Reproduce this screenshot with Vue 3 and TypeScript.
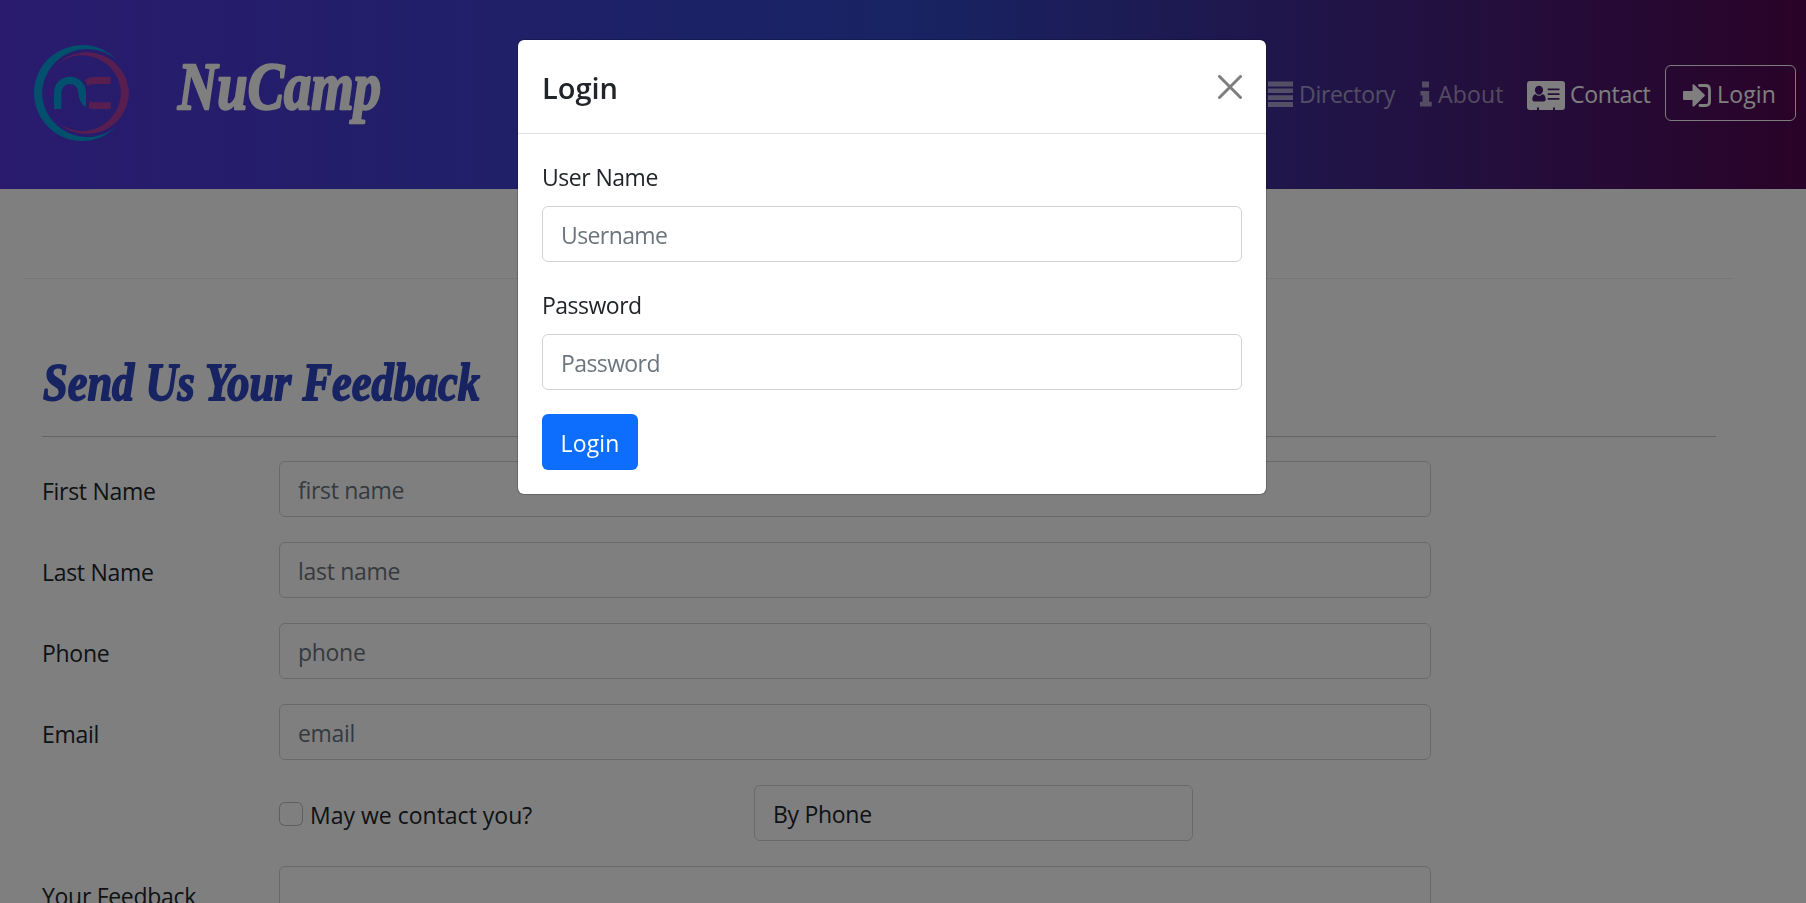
<script setup lang="ts">
import { ref } from 'vue'

interface Field {
  id: string
  label: string
  placeholder: string
}

const fields: Field[] = [
  { id: 'firstName', label: 'First Name', placeholder: 'first name' },
  { id: 'lastName', label: 'Last Name', placeholder: 'last name' },
  { id: 'phone', label: 'Phone', placeholder: 'phone' },
  { id: 'email', label: 'Email', placeholder: 'email' },
]

const modalOpen = ref(true)
</script>

<template>
  <div class="page">
    <header class="hero">
      <svg class="logo" viewBox="0 0 96 97">
        <g fill="#00a0dc">
          <path d="M82.700 14.700A48 48 0 1 0 82 82A45.500 45.500 0 0 1 8 48.200A45.500 45.500 0 0 1 82.700 14.700Z" />
          <path d="M20 64V47.500A16 15.800 0 0 1 52 47.500V62Q44.400 58 44.400 47.500A8.400 8.300 0 0 0 27.300 47.500V64Z" />
        </g>
        <g fill="#b03ca0">
          <path d="M24 18.500A42.300 42.300 0 0 1 95 48A42.300 42.300 0 0 1 24 77.700A39 39 0 0 0 87 48A39 39 0 0 0 24 18.500Z" />
          <path d="M51 35.300Q54.500 32 60 32H76.700V39H60Q56 39 53.500 41Z" />
          <path d="M55 56.300Q57 57.300 60 57.300H76.700V64H60Q57 64 55 63Z" />
        </g>
      </svg>
      <svg class="brand" viewBox="0 0 210 90">
        <text x="2" y="64" textLength="203" lengthAdjust="spacingAndGlyphs">NuCamp</text>
      </svg>
      <nav class="nav">
        <a class="item dim">
          <svg class="i-list" viewBox="0 0 25 26">
            <path d="M0 0.500H25V5.500H0ZM0 7.500H25V12H0ZM0 14.200H25V19H0ZM0 21H25V26H0Z" />
          </svg>
          <span>Directory</span>
        </a>
        <a class="item dim">
          <svg class="i-info" viewBox="0 0 12 26">
            <path d="M2 0.500H9V6.500H2ZM0.500 10H9.200V20.800H11.700V25.500H0V20.800H2.500V14.500H0.500Z" />
          </svg>
          <span class="loose">About</span>
        </a>
        <a class="item">
          <svg class="i-card" viewBox="0 0 38 29">
            <path fill-rule="evenodd" d="M3 0H35Q38 0 38 3V26Q38 29 35 29H28V26.500H26V29H12V26.500H10V29H3Q0 29 0 26V3Q0 0 3 0ZM12 4.800A4.300 4.500 0 0 0 9.300 12.700Q5.300 13.500 5.300 18.500Q5.300 20.600 7.300 20.600H16.700Q18.700 20.600 18.700 18.500Q18.700 13.500 14.700 12.700A4.300 4.500 0 0 0 12 4.800ZM20.700 7.500H32.500V9.300H20.700ZM20.700 12.300H32.500V14H20.700ZM20.700 17H32.500V18.700H20.700Z" />
            <path d="M9 12.300Q12 15.400 15 12.300L15.500 13.200Q12 16.400 8.500 13.200Z" />
          </svg>
          <span>Contact</span>
        </a>
        <button class="item outline" type="button" @click="modalOpen = true">
          <svg class="i-sign" viewBox="0 0 28 23">
            <path d="M1 7H9.500V1Q9.800 -0.500 11.300 0.700L21.500 10.500Q22.300 11.400 21.500 12.300L11.300 22.200Q9.800 23.300 9.500 21.800V16H1Q0 16 0 15V8Q0 7 1 7Z" />
            <path class="line" d="M16.500 1.500H22.500Q26.500 1.500 26.500 5.500V17.500Q26.500 21.500 22.500 21.500H17" />
          </svg>
          <span class="loose">Login</span>
        </button>
      </nav>
    </header>

    <main class="container">
      <section class="feedback">
        <svg class="heading" viewBox="0 0 450 70">
          <text x="1" y="50" textLength="437" lengthAdjust="spacingAndGlyphs">Send Us Your Feedback</text>
        </svg>
        <form class="form">
          <div v-for="f in fields" :key="f.id" class="row">
            <label :for="f.id">{{ f.label }}</label>
            <input :id="f.id" class="control" type="text" :placeholder="f.placeholder" />
          </div>
          <div class="row contact-row">
            <label class="check">
              <input type="checkbox" />
              <span>May we contact you?</span>
            </label>
            <select class="control">
              <option>By Phone</option>
              <option>By Email</option>
            </select>
          </div>
          <div class="row">
            <label for="feedback">Your Feedback</label>
            <textarea id="feedback" class="control" rows="12"></textarea>
          </div>
        </form>
      </section>
    </main>

    <div v-if="modalOpen" class="backdrop">
      <div class="modal" role="dialog">
        <div class="modal-header">
          <h5>Login</h5>
          <button class="close" type="button" aria-label="Close" @click="modalOpen = false">
            <svg viewBox="0 0 24 24"><path d="M1.500 1.500L22.500 22.500M22.500 1.500L1.500 22.500" /></svg>
          </button>
        </div>
        <form class="modal-body" @submit.prevent>
          <label for="user">User Name</label>
          <input id="user" class="control" type="text" placeholder="Username" />
          <label for="pass">Password</label>
          <input id="pass" class="control" type="password" placeholder="Password" />
          <button class="primary loose" type="submit">Login</button>
        </form>
      </div>
    </div>
  </div>
</template>

<style>
html,
body {
  overflow: hidden;
}
</style>

<style scoped>
.page {
  height: 903px;
  overflow: hidden;
  background: #fff;
  color: #212529;
  font: 23px/36px "Open Sans", "Noto Sans", sans-serif;
  letter-spacing: -0.3px;
}
.page * {
  box-sizing: border-box;
}
button,
input,
select,
textarea {
  font: inherit;
  letter-spacing: inherit;
  color: inherit;
}
.loose {
  letter-spacing: 0.15px;
}
.hero {
  display: flex;
  height: 189px;
  background: linear-gradient(to right, #5436dc, #3048c8, #540650);
}
.logo {
  width: 96px;
  height: 97px;
  margin: 45px 0 0 33.5px;
}
.brand,
.heading {
  display: block;
  overflow: visible;
  font: italic bold 67px "Liberation Serif", serif;
  letter-spacing: 0;
  stroke-width: 2.4px;
  stroke-linejoin: round;
}
.brand {
  width: 210px;
  height: 90px;
  margin: 45px 0 0 46.5px;
  fill: #fff;
  stroke: #fff;
}
.nav {
  display: grid;
  grid-template-columns: 152px 107px 138px 131px;
  height: 56px;
  margin: 65px 10px 0 auto;
}
.item {
  display: flex;
  align-items: center;
  color: #fff;
}
.item span {
  padding-top: 2px;
}
.item svg {
  flex: none;
  fill: currentColor;
}
.dim {
  color: rgba(255, 255, 255, 0.55);
}
.i-list {
  width: 25px;
  height: 26px;
  margin: 2px 6px 0 0;
}
.i-info {
  width: 12px;
  height: 26px;
  margin: 2px 6px 0 0;
}
.i-card {
  width: 38px;
  height: 29px;
  margin: 5px 5px 0 0;
}
.i-sign {
  width: 28px;
  height: 23px;
  margin: 5px 6px 0 0;
}
.line {
  fill: none;
  stroke: currentColor;
  stroke-width: 2.8;
  stroke-linecap: round;
}
.outline {
  padding: 0 0 0 17px;
  background: none;
  border: 1px solid #f8f9fa;
  border-radius: 6px;
}
.container {
  width: 1710px;
  margin-left: 24px;
  padding-top: 89px;
}
.feedback {
  border-top: 1px solid #eee;
  padding: 71px 18px 0;
}
.heading {
  width: 450px;
  height: 70px;
  font-size: 53px;
  fill: #3048c4;
  stroke: #3048c4;
  stroke-width: 1.8px;
}
.form {
  margin-top: 16px;
  border-top: 1px solid #c8c9ca;
  padding-top: 24px;
  color: #212529;
}
.row {
  display: grid;
  grid-template-columns: 237px 1152px;
  margin-bottom: 25px;
}
.row > label {
  padding-top: 12px;
  height: 56px;
}
.control {
  width: 100%;
  height: 56px;
  padding: 10px 18px 8px;
  background: #fff;
  border: 1px solid #ced4da;
  border-radius: 6px;
  outline: none;
  appearance: none;
}
.control::placeholder {
  color: #6c757d;
  opacity: 1;
}
textarea.control {
  height: 300px;
  resize: none;
}
.contact-row {
  grid-template-columns: 475px 439px;
  margin-left: 237px;
}
.row > .check {
  display: flex;
  padding-top: 12px;
  letter-spacing: 0;
}
.check input {
  flex: none;
  appearance: none;
  width: 24px;
  height: 24px;
  margin: 5px 7px 0 0;
  background: #fff;
  border: 1px solid rgba(0, 0, 0, 0.25);
  border-radius: 6px;
}
.backdrop {
  position: fixed;
  inset: 0;
  display: flex;
  justify-content: center;
  align-items: flex-start;
  padding: 39px 22px 0 0;
  background: rgba(0, 0, 0, 0.5);
}
.modal {
  width: 750px;
  background: #fff;
  background-clip: padding-box;
  border: 1px solid rgba(0, 0, 0, 0.2);
  border-radius: 7px;
}
.modal-header {
  display: flex;
  justify-content: space-between;
  align-items: center;
  padding: 24px;
  border-bottom: 1px solid #dee2e6;
}
h5 {
  margin: 0;
  padding-top: 2px;
  font-size: 29px;
  font-weight: 600;
  line-height: 43px;
  letter-spacing: 0;
}
.close {
  width: 24px;
  height: 24px;
  padding: 0;
  border: 0;
  background: none;
  opacity: 0.5;
}
.close svg {
  display: block;
  fill: none;
  stroke: #000;
  stroke-width: 3;
  stroke-linecap: round;
}
.modal-body {
  padding: 24px;
}
.modal-body label {
  display: block;
  padding-top: 2px;
  margin-bottom: 12px;
  line-height: 34px;
  letter-spacing: -0.5px;
}
.modal-body .control {
  display: block;
  margin-bottom: 24px;
  letter-spacing: -0.6px;
}
.primary {
  display: block;
  width: 96px;
  height: 56px;
  padding: 2px 0 0;
  color: #fff;
  background: #0d6efd;
  border: 0;
  border-radius: 6px;
}
</style>
